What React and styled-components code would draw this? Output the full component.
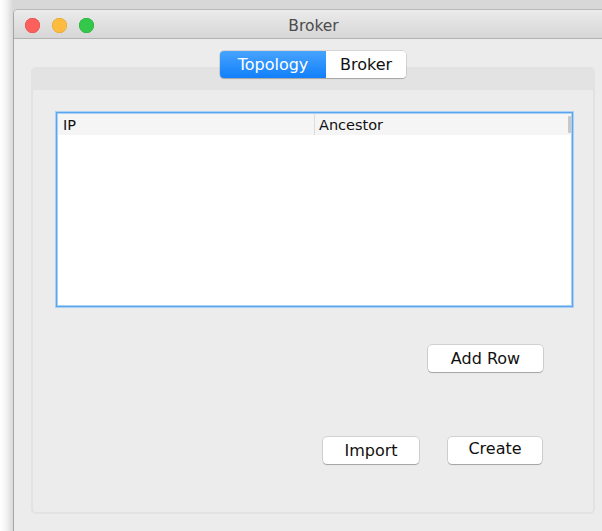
import React from 'react';
import styled, { createGlobalStyle } from 'styled-components';

const GlobalStyle = createGlobalStyle`
    html, body {
        margin: 0;
        padding: 0;
        background: #ffffff;
        font-family: "DejaVu Sans", "Liberation Sans", sans-serif;
    }
`;

const Desktop = styled.div`
    height: 531px;
    padding: 9px 0 0 13px;
    box-sizing: border-box;
    overflow: hidden;
    background: linear-gradient(to right, #ffffff 0px, #f4f4f4 6px, #d8d8d8 13px);
`;

const Window = styled.div`
    width: 600px;
    height: 560px;
    display: flex;
    flex-direction: column;
    background: #ececec;
    border-left: 1px solid #a6a6a6;
    border-top: 1px solid #b9b9b9;
    border-top-left-radius: 5px;
    box-sizing: border-box;
    overflow: hidden;
`;

const TitleBar = styled.div`
    height: 26px;
    padding-top: 2px;
    flex: none;
    display: grid;
    grid-template-columns: 1fr auto 1fr;
    align-items: center;
    background: linear-gradient(#ebebeb, #d6d6d6);
    border-bottom: 1px solid #b3b3b3;
`;

const Lights = styled.div`
    display: flex;
    gap: 12px;
    padding-left: 11px;
`;

const Light = styled.span`
    width: 15px;
    height: 15px;
    border-radius: 50%;
    background: ${p => p.$fill};
    box-shadow: inset 0 0 0 0.5px ${p => p.$edge};
`;

const Title = styled.div`
    font-size: 15.5px;
    color: #4c4c4c;
    padding-top: 1px;
`;

const Body = styled.div`
    flex: 1;
    display: flex;
    flex-direction: column;
    padding: 12px 18px 0 17px;
`;

const Tabs = styled.div`
    align-self: center;
    display: flex;
    height: 27px;
    border-radius: 4px;
    box-shadow: 0 0 0 0.5px rgba(0, 0, 0, 0.18), 0 1px 1px rgba(0, 0, 0, 0.2);
    position: relative;
    z-index: 1;
`;

const Tab = styled.div`
    width: ${p => p.$width}px;
    display: flex;
    align-items: center;
    justify-content: center;
    font-size: 16px;
    color: ${p => (p.$active ? '#ffffff' : '#111111')};
    background: ${p => (p.$active ? 'linear-gradient(#47a3fd, #1180fb)' : '#ffffff')};
    &:first-child {
        border-radius: 4px 0 0 4px;
    }
    &:last-child {
        border-radius: 0 4px 4px 0;
    }
`;

const Panel = styled.div`
    margin-top: -11px;
    height: 447px;
    display: flex;
    flex-direction: column;
    border: 2px solid #e2e2e2;
    border-radius: 5px;
    box-sizing: border-box;
`;

const PanelStrip = styled.div`
    height: 21px;
    flex: none;
    background: #e3e3e3;
`;

const PanelContent = styled.div`
    flex: 1;
    display: flex;
    flex-direction: column;
    padding: 22px 20px 0 23px;
`;

const Table = styled.div`
    width: 517px;
    height: 195px;
    box-sizing: border-box;
    background: #ffffff;
    border: 1px solid #5aa5ec;
    box-shadow: 0 0 0 1px #a9d0f5, inset 0 0 0 1px #a9d0f5;
`;

const HeaderRow = styled.div`
    display: grid;
    grid-template-columns: 257px 1fr 3px;
    height: 21px;
    margin: 1px;
    background: #f5f5f5;
`;

const HeaderCell = styled.div`
    display: flex;
    align-items: center;
    padding-left: ${p => p.$pad}px;
    font-size: 14.5px;
    color: #111111;
    border-right: 1px solid ${p => (p.$last ? '#f5f5f5' : '#dcdcdc')};
`;

const ScrollStub = styled.div`
    margin: 2px 0;
    background: #c8c8c8;
    border-radius: 1px;
`;

const ButtonRow = styled.div`
    display: flex;
    justify-content: flex-end;
    gap: ${p => p.$gap || 0}px;
    margin-top: ${p => p.$top}px;
    padding-right: ${p => p.$right}px;
`;

const Button = styled.button`
    width: ${p => p.$width}px;
    height: 27px;
    padding: 0 0 ${p => p.$lift || 0}px;
    border: none;
    border-radius: 4px;
    background: #ffffff;
    box-shadow: 0 0 0 0.5px rgba(0, 0, 0, 0.22), 0 1px 1px rgba(0, 0, 0, 0.22);
    font-family: "DejaVu Sans", "Liberation Sans", sans-serif;
    font-size: 16px;
    color: #111111;
`;

const App = () => {
    return (
        <>
            <GlobalStyle />
            <Desktop>
                <Window>
                    <TitleBar>
                        <Lights>
                            <Light $fill="#fc605c" $edge="#de4a44" />
                            <Light $fill="#fdbc40" $edge="#dea033" />
                            <Light $fill="#34c84a" $edge="#27aa35" />
                        </Lights>
                        <Title>Broker</Title>
                        <div />
                    </TitleBar>
                    <Body>
                        <Tabs>
                            <Tab $width={106} $active>Topology</Tab>
                            <Tab $width={80}>Broker</Tab>
                        </Tabs>
                        <Panel>
                            <PanelStrip />
                            <PanelContent>
                                <Table>
                                    <HeaderRow>
                                        <HeaderCell $pad={5}>IP</HeaderCell>
                                        <HeaderCell $pad={4} $last>Ancestor</HeaderCell>
                                        <ScrollStub />
                                    </HeaderRow>
                                </Table>
                                <ButtonRow $top={38} $right={30}>
                                    <Button $width={115}>Add Row</Button>
                                </ButtonRow>
                                <ButtonRow $top={65} $right={31} $gap={29}>
                                    <Button $width={96}>Import</Button>
                                    <Button $width={94} $lift={5}>Create</Button>
                                </ButtonRow>
                            </PanelContent>
                        </Panel>
                    </Body>
                </Window>
            </Desktop>
        </>
    );
};

export default App;
